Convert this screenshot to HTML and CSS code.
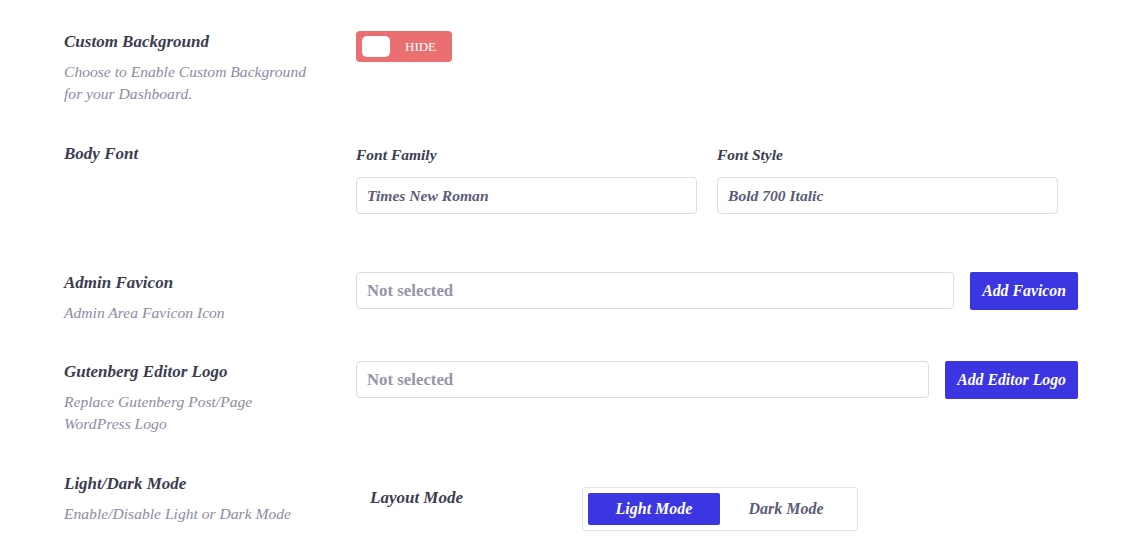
FILE: index.html
```html
<!DOCTYPE html>
<html lang="en">
<head>
    <meta charset="UTF-8">
    <meta name="viewport" content="width=device-width, initial-scale=1.0">
    <title>Dashboard Settings</title>
    <link rel="stylesheet" href="styles.css">
</head>
<body>
    <main class="settings">
        <!-- Custom background -->
        <section class="setting-row">
            <div class="setting-info">
                <h3 class="setting-title">Custom Background</h3>
                <p class="setting-desc">Choose to Enable Custom Background<br>for your Dashboard.</p>
            </div>
            <div class="setting-control">
                <button class="toggle" type="button">
                    <span class="toggle-knob"></span>
                    <span class="toggle-label">HIDE</span>
                </button>
            </div>
        </section>

        <!-- Body font -->
        <section class="setting-row body-font">
            <div class="setting-info">
                <h3 class="setting-title">Body Font</h3>
            </div>
            <div class="setting-control font-fields">
                <div class="field">
                    <label class="field-label">Font Family</label>
                    <div class="text-input italic">Times New Roman</div>
                </div>
                <div class="field">
                    <label class="field-label">Font Style</label>
                    <div class="text-input italic">Bold 700 Italic</div>
                </div>
            </div>
        </section>

        <!-- Favicon -->
        <section class="setting-row favicon">
            <div class="setting-info">
                <h3 class="setting-title">Admin Favicon</h3>
                <p class="setting-desc">Admin Area Favicon Icon</p>
            </div>
            <div class="setting-control upload">
                <div class="text-input placeholder">Not selected</div>
                <button class="btn-primary" type="button">Add Favicon</button>
            </div>
        </section>

        <!-- Editor logo -->
        <section class="setting-row">
            <div class="setting-info">
                <h3 class="setting-title">Gutenberg Editor Logo</h3>
                <p class="setting-desc">Replace Gutenberg Post/Page<br>WordPress Logo</p>
            </div>
            <div class="setting-control upload">
                <div class="text-input placeholder">Not selected</div>
                <button class="btn-primary" type="button">Add Editor Logo</button>
            </div>
        </section>

        <!-- Light / dark -->
        <section class="setting-row">
            <div class="setting-info">
                <h3 class="setting-title">Light/Dark Mode</h3>
                <p class="setting-desc">Enable/Disable Light or Dark Mode</p>
            </div>
            <div class="setting-control mode">
                <span class="mode-label">Layout Mode</span>
                <div class="segmented">
                    <button class="segment active" type="button">Light Mode</button>
                    <button class="segment" type="button">Dark Mode</button>
                </div>
            </div>
        </section>
    </main>
</body>
</html>
```

FILE: styles.css
```css
body {
    margin: 0;
    background: #fff;
    font-family: "Liberation Serif", "Times New Roman", serif;
    color: #3c3c50;
}
.settings {
    width: 1014px;
    padding: 31px 0 0 64px;
}
.setting-row {
    display: flex;
    margin-bottom: 38px;
}
.setting-row.body-font {
    padding-bottom: 20px;
}
.setting-row.favicon {
    margin-bottom: 37px;
}
.setting-info {
    width: 292px;
    flex-shrink: 0;
}
.setting-title {
    margin: 0;
    font-size: 17px;
    line-height: 22px;
    font-weight: bold;
    font-style: italic;
    color: #3c3c50;
}
.setting-desc {
    margin: 8px 0 0;
    font-size: 15.6px;
    line-height: 22px;
    font-style: italic;
    color: #8c8ca2;
}
.setting-control {
    flex: 1;
}

/* toggle */
.toggle {
    display: flex;
    align-items: center;
    width: 96px;
    height: 31px;
    padding: 0 6px;
    border: none;
    border-radius: 4px;
    background: #e96f70;
    cursor: pointer;
}
.toggle-knob {
    width: 28px;
    height: 21px;
    background: #fff;
    border-radius: 5px;
}
.toggle-label {
    margin-left: 15px;
    font-family: "Liberation Serif", serif;
    font-size: 13px;
    color: #fff;
}

/* font fields */
.font-fields {
    display: flex;
    gap: 20px;
    padding-top: 1px;
}
.field {
    width: 341px;
}
.field-label {
    display: block;
    font-size: 15.5px;
    line-height: 22px;
    font-weight: bold;
    font-style: italic;
    color: #3c3c50;
    margin-bottom: 11px;
}
.text-input {
    box-sizing: border-box;
    height: 37px;
    padding: 0 10px;
    border: 1px solid #dcdce4;
    border-radius: 4px;
    display: flex;
    align-items: center;
    font-size: 16.8px;
    font-weight: bold;
}
.text-input.italic {
    font-style: italic;
    font-size: 15.6px;
    color: #5c5c78;
}
.text-input.placeholder {
    color: #9495a8;
}

/* upload rows */
.upload {
    display: flex;
    gap: 16px;
}
.upload .text-input {
    flex: 1;
}
.btn-primary {
    height: 38px;
    padding: 0 12px;
    border: none;
    border-radius: 2px;
    background: #3b36e1;
    color: #fff;
    font-family: "Liberation Serif", serif;
    font-size: 15.8px;
    font-weight: bold;
    font-style: italic;
    cursor: pointer;
}

/* layout mode */
.mode {
    display: flex;
    align-items: flex-start;
    padding-top: 14px;
}
.mode-label {
    width: 212px;
    padding-left: 14px;
    font-size: 17px;
    line-height: 22px;
    font-weight: bold;
    font-style: italic;
}
.segmented {
    display: flex;
    width: 276px;
    box-sizing: border-box;
    padding: 5px;
    border: 1px solid #e2e2ea;
    border-radius: 3px;
}
.segment {
    flex: 1;
    height: 32px;
    border: none;
    border-radius: 2px;
    background: transparent;
    font-family: "Liberation Serif", serif;
    font-size: 16px;
    font-weight: bold;
    font-style: italic;
    color: #5c5c78;
    cursor: pointer;
}
.segment.active {
    background: #3b36e1;
    color: #fff;
}
```
